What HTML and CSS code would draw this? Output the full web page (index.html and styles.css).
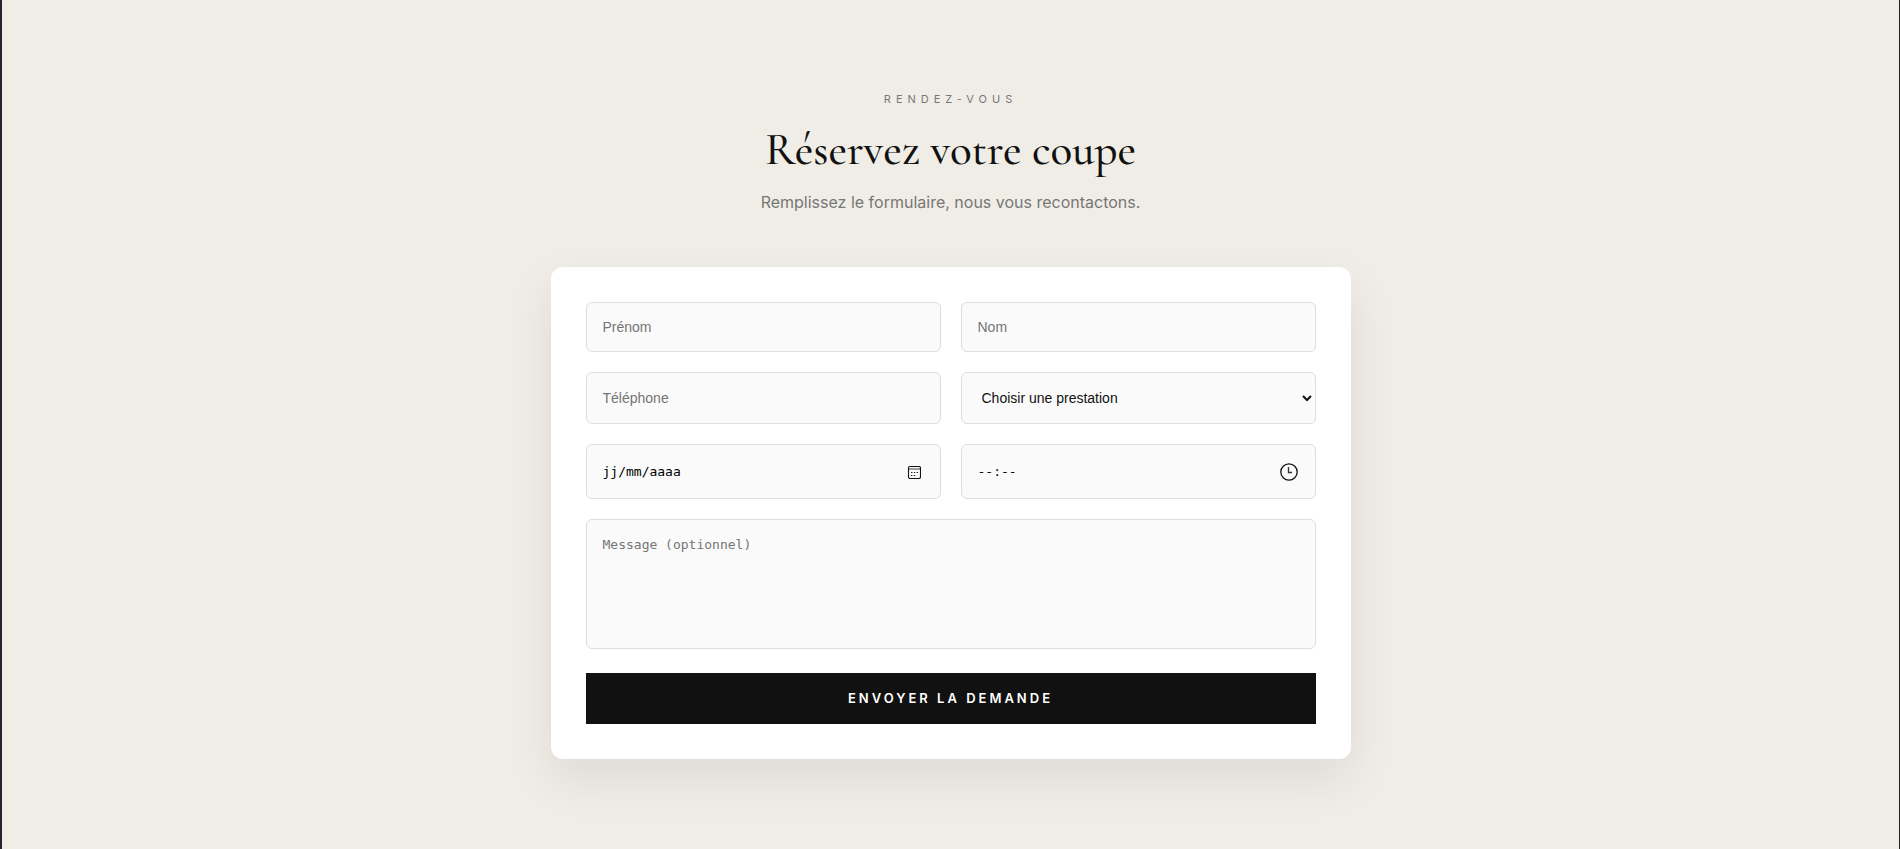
FILE: index.html
```html
<!DOCTYPE html>
<html lang="fr">
<head>
    <meta charset="UTF-8">
    <meta name="viewport" content="width=device-width, initial-scale=1.0">
    <title>Réservez votre coupe</title>
    <link rel="stylesheet" href="styles.css">
</head>
<body>
    <section class="booking" id="rendez-vous">
        <header class="section-header">
            <p class="label">Rendez-vous</p>
            <h2>Réservez votre coupe</h2>
            <p class="subtitle">Remplissez le formulaire, nous vous recontactons.</p>
        </header>

        <form class="booking-form">
            <div class="form-grid">
                <input type="text" name="prenom" placeholder="Prénom" aria-label="Prénom" required>
                <input type="text" name="nom" placeholder="Nom" aria-label="Nom" required>
                <input type="tel" class="tall" name="telephone" placeholder="Téléphone" aria-label="Téléphone" required>
                <select class="tall" name="prestation" aria-label="Prestation" required>
                    <option value="">Choisir une prestation</option>
                    <option>Coupe</option>
                    <option>Coupe et barbe</option>
                    <option>Barbe</option>
                </select>

                <!-- Date and time -->
                <div class="picker">
                    <input type="text" name="date" placeholder="jj/mm/aaaa" aria-label="Date" required>
                    <button type="button" class="picker-icon" aria-label="Ouvrir le calendrier">
                        <svg width="14" height="14" viewBox="0 0 14 14" fill="none">
                            <rect x="1.5" y="1.5" width="12" height="12" rx="1.5" stroke="#111" stroke-width="1.1"/>
                            <path d="M2 4h11" stroke="#665b60" stroke-width="1.2"/>
                            <path d="M4 7.5h1.4M6.8 7.5h1.4M9.6 7.5H11M4 10.5h1.4M6.8 10.5h1.4" stroke="#222" stroke-width="1.2"/>
                        </svg>
                    </button>
                </div>
                <div class="picker">
                    <input type="text" name="heure" placeholder="--:--" aria-label="Heure" required>
                    <button type="button" class="picker-icon" aria-label="Choisir une heure">
                        <svg width="18" height="18" viewBox="0 0 18 18" fill="none">
                            <circle cx="9" cy="9" r="8.2" stroke="#111" stroke-width="1.3"/>
                            <path d="M8.5 4v5.5H12" stroke="#333" stroke-width="1.3"/>
                        </svg>
                    </button>
                </div>

                <textarea name="message" placeholder="Message (optionnel)" aria-label="Message"></textarea>
            </div>
            <button type="submit" class="btn">Envoyer la demande</button>
        </form>
    </section>
</body>
</html>
```
FILE: styles.css
```css
* {
    margin: 0;
    padding: 0;
    box-sizing: border-box;
}
body {
    font-family: Inter, sans-serif;
    background: #f0ede6;
    color: #111;
    line-height: 26px;
    border-left: 2px solid #26242c;
    border-right: 1px solid #222;
}
.booking {
    padding: 90px 20px;
}
.section-header {
    text-align: center;
    margin-bottom: 52px;
}
.label {
    font-size: 11px;
    line-height: 18px;
    letter-spacing: 5px;
    text-transform: uppercase;
    color: #777;
}
h2 {
    font-family: "Cormorant Garamond", "Liberation Serif", serif;
    font-size: 45px;
    font-weight: 500;
    line-height: 59px;
    margin: 12px 0 10px;
}
.subtitle {
    font-size: 16px;
    color: #777;
}
.booking-form {
    max-width: 800px;
    margin: 0 auto;
    padding: 35px;
    background: #fff;
    border-radius: 12px;
    box-shadow: 0 20px 50px rgba(0, 0, 0, 0.08);
}
.form-grid {
    display: grid;
    grid-template-columns: 1fr 1fr;
    gap: 20px;
}
input, select, textarea {
    width: 100%;
    height: 50px;
    padding: 16px;
    font-family: "Liberation Sans", Arial, sans-serif;
    font-size: 14px;
    color: #111;
    background: #fafafa;
    border: 1px solid #ddd;
    border-radius: 6px;
}
.tall {
    height: 52px;
}
select {
    padding: 0 0 0 16px;
}
::placeholder {
    color: #757575;
}
textarea {
    display: block;
    grid-column: 1 / -1;
    height: 130px;
    font-family: Consolas, "DejaVu Sans Mono", monospace;
    font-size: 13px;
    line-height: 17px;
    resize: none;
}
.picker {
    position: relative;
}
.picker input {
    display: block;
    height: 55px;
    font-family: Consolas, "DejaVu Sans Mono", monospace;
    font-size: 13px;
}
.picker ::placeholder {
    color: #000;
}
.picker-icon {
    position: absolute;
    top: 0;
    right: 18px;
    height: 100%;
    min-width: 18px;
    display: flex;
    align-items: center;
    justify-content: center;
    background: none;
    border: none;
    cursor: pointer;
}
.btn {
    display: block;
    width: 100%;
    height: 51px;
    margin-top: 24px;
    padding-bottom: 2px;
    font-family: Inter, sans-serif;
    font-size: 13px;
    font-weight: 600;
    letter-spacing: 3px;
    text-transform: uppercase;
    color: #fff;
    background: #111;
    border: none;
    cursor: pointer;
}
.btn:hover {
    background: #333;
}
```
